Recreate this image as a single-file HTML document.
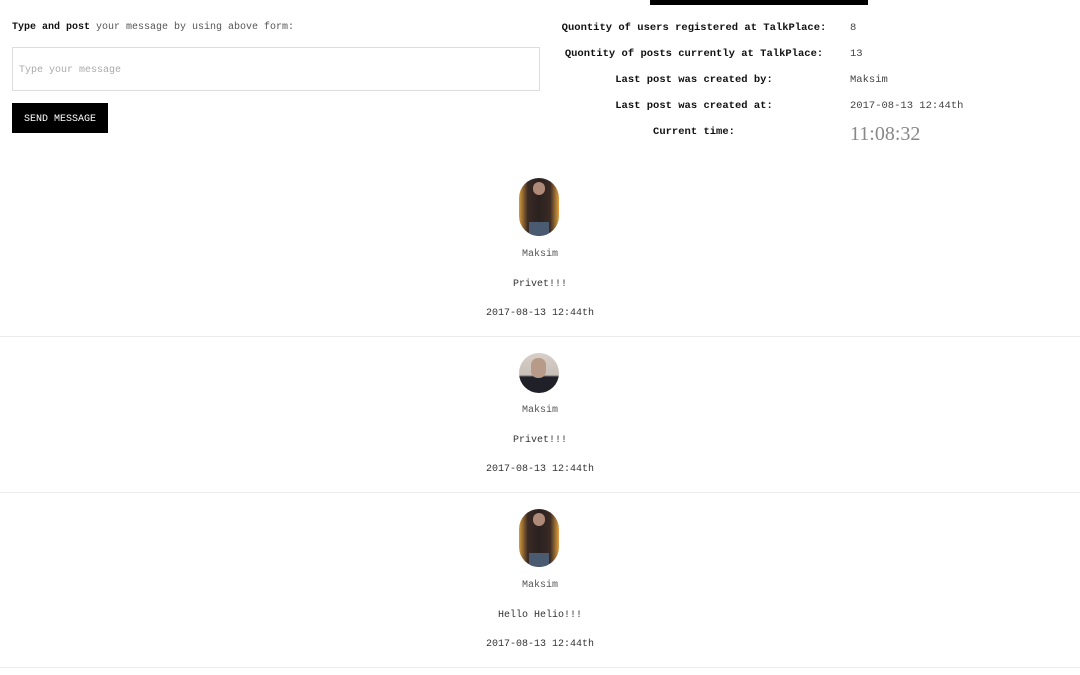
<!DOCTYPE html>
<html><head><meta charset="utf-8"><style>
body{margin:0;width:1080px;height:675px;background:#fff;position:relative;overflow:hidden;font-family:"Liberation Mono",monospace;font-size:10px;color:#333}
.a{position:absolute;white-space:nowrap}
.lbl{font-weight:bold;font-size:10.5px;color:#111;text-align:center;width:280px;left:554px}
.val{left:850px;font-size:10.5px;color:#444}
.av{position:absolute;left:519px;width:40px;overflow:hidden}
.tall{height:58px;border-radius:20px;background:linear-gradient(90deg,#d89a3c 0%,#3a2a24 22%,#2a2220 50%,#3a2a24 78%,#e0a040 100%)}
.tall:before{content:"";position:absolute;left:14px;top:4px;width:12px;height:13px;border-radius:6px;background:#b08a78}
.tall:after{content:"";position:absolute;left:10px;top:44px;width:20px;height:14px;background:#4a5a70}
.circ{height:40px;border-radius:50%;background:linear-gradient(180deg,#d8d0c8 0%,#c8c0b8 55%,#202028 60%,#202028 100%)}
.circ:before{content:"";position:absolute;left:12px;top:5px;width:15px;height:20px;border-radius:7px;background:#b89a88}
.c{left:0;width:1080px;text-align:center;font-size:10px}
.hr{position:absolute;left:0;width:1080px;height:1px;background:#ebebeb}
</style></head><body>
<div class="a" style="left:650px;top:0;width:218px;height:5px;background:#000"></div>
<div class="a" style="left:12px;top:22px;color:#555"><b style="color:#111">Type and post</b> your message by using above form:</div>
<div class="a" style="left:12px;top:47px;width:526px;height:42px;border:1px solid #ddd"></div>
<div class="a" style="left:19px;top:65px;color:#aaa;font-size:10px">Type your message</div>
<div class="a" style="left:12px;top:103px;width:96px;height:30px;background:#000;color:#fff;font-size:10px;line-height:30px;text-align:center;padding-top:2px;box-sizing:border-box">SEND MESSAGE</div>

<div class="a lbl" style="top:22px">Quontity of users registered at TalkPlace:</div>
<div class="a lbl" style="top:48px">Quontity of posts currently at TalkPlace:</div>
<div class="a lbl" style="top:74px">Last post was created by:</div>
<div class="a lbl" style="top:100px">Last post was created at:</div>
<div class="a lbl" style="top:126px">Current time:</div>
<div class="a val" style="top:22px">8</div>
<div class="a val" style="top:48px">13</div>
<div class="a val" style="top:74px">Maksim</div>
<div class="a val" style="top:100px">2017-08-13 12:44th</div>
<div class="a" style="left:850px;top:123px;font-family:'Liberation Serif',serif;font-size:20px;color:#888">11:08:32</div>

<div class="av tall" style="top:178px"></div>
<div class="a c" style="top:249px;color:#555">Maksim</div>
<div class="a c" style="top:279px">Privet!!!</div>
<div class="a c" style="top:308px">2017-08-13 12:44th</div>
<div class="hr" style="top:336px"></div>

<div class="av circ" style="top:353px"></div>
<div class="a c" style="top:405px;color:#555">Maksim</div>
<div class="a c" style="top:435px">Privet!!!</div>
<div class="a c" style="top:464px">2017-08-13 12:44th</div>
<div class="hr" style="top:492px"></div>

<div class="av tall" style="top:509px"></div>
<div class="a c" style="top:580px;color:#555">Maksim</div>
<div class="a c" style="top:610px">Hello Helio!!!</div>
<div class="a c" style="top:639px">2017-08-13 12:44th</div>
<div class="hr" style="top:667px"></div>
</body></html>
